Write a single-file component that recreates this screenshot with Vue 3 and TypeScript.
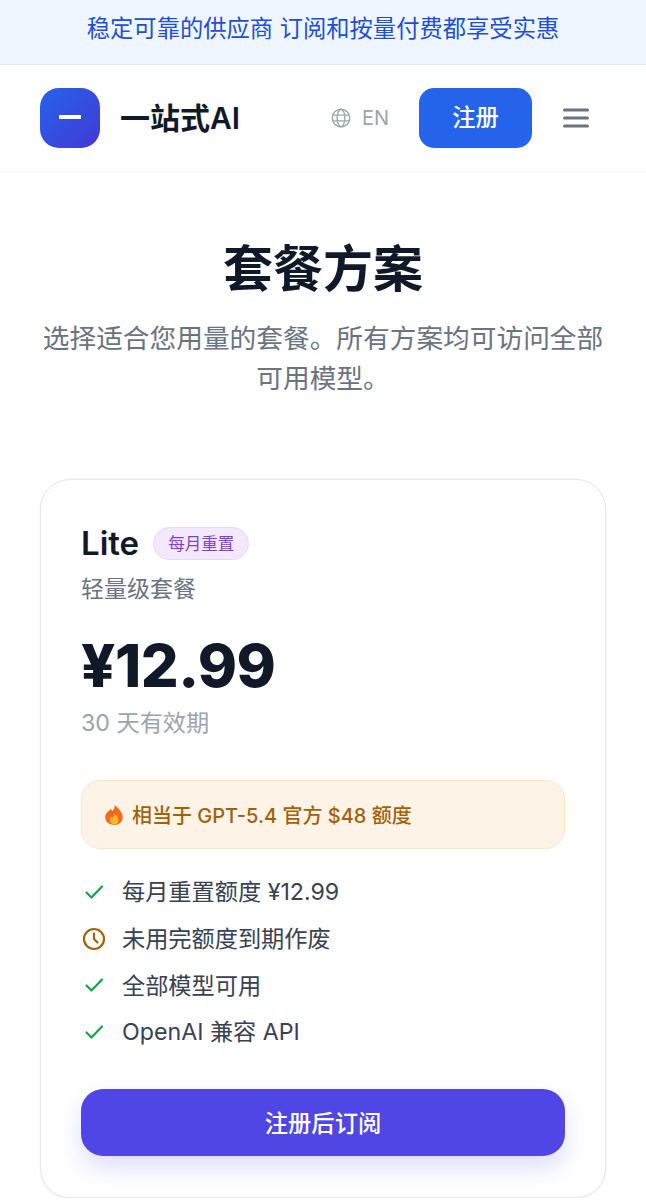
<template>
  <div class="page">
    <div class="banner">稳定可靠的供应商 订阅和按量付费都享受实惠</div>

    <header class="nav">
      <div class="brand">
        <span class="brand__logo"><span class="brand__dash"></span></span>
        <span class="brand__name">一站式AI</span>
      </div>
      <div class="nav__lang">
        <svg class="nav__globe" viewBox="0 0 24 24" fill="none" stroke="currentColor" stroke-width="1.6">
          <circle cx="12" cy="12" r="10.500" />
          <ellipse cx="12" cy="12" rx="4.600" ry="10.500" />
          <path d="M2.300 8.500h19.400M2.300 15.500h19.400" />
        </svg>
        <span>EN</span>
      </div>
      <button class="nav__signup">注册</button>
      <svg class="nav__menu" viewBox="0 0 26 20" fill="none" stroke="currentColor" stroke-width="3" stroke-linecap="round">
        <path d="M1.500 2h23M1.500 10h23M1.500 18h23" />
      </svg>
    </header>

    <section class="intro">
      <h1 class="intro__title">套餐方案</h1>
      <p class="intro__text">选择适合您用量的套餐。所有方案均可访问全部可用模型。</p>
    </section>

    <article class="plan">
      <div class="plan__head">
        <h2 class="plan__name">Lite</h2>
        <span class="plan__badge">每月重置</span>
      </div>
      <p class="plan__sub">轻量级套餐</p>
      <div class="plan__price">¥12.99</div>
      <p class="plan__valid">30 天有效期</p>

      <div class="callout">
        <svg class="callout__flame" viewBox="0 0 24 24">
          <path fill="#f4691c" d="M12.600 1c.6 3.400-1 5-2.700 6.800-.5-.8-.7-1.600-.7-2.600C6 7.500 2.500 10.500 2.500 14.300 2.500 19.200 6.800 23 12 23s9.500-3.600 9.500-8.300C21.500 9.200 16.800 4.200 12.600 1z" />
          <path fill="#fbb52b" d="M12.300 11c.3 2-1 2.900-2 4-.5-.4-.8-.9-.9-1.500-1.300 1.300-2 2.600-2 4 0 2.900 2.100 5 4.700 5s4.700-2.100 4.700-4.900c0-2.900-1.900-5.300-4.500-6.600z" />
        </svg>
        <span>相当于 GPT-5.4 官方 $48 额度</span>
      </div>

      <ul class="features">
        <li v-for="item in features" :key="item.text" class="features__row">
          <svg v-if="item.kind === 'check'" class="features__icon features__icon--check" viewBox="0 0 24 24" fill="none" stroke="currentColor" stroke-width="2.200" stroke-linecap="round" stroke-linejoin="round">
            <path d="M4.500 12.500l5 5L20 6.500" />
          </svg>
          <svg v-else class="features__icon features__icon--clock" viewBox="0 0 24 24" fill="none" stroke="currentColor" stroke-width="2.200" stroke-linecap="round" stroke-linejoin="round">
            <circle cx="12" cy="12" r="10" />
            <path d="M12 6.500V12l3.500 3.500" />
          </svg>
          <span>{{ item.text }}</span>
        </li>
      </ul>

      <button class="plan__cta">注册后订阅</button>
    </article>
  </div>
</template>

<script setup lang="ts">
interface Feature {
  kind: 'check' | 'clock'
  text: string
}

const features: Feature[] = [
  { kind: 'check', text: '每月重置额度 ¥12.99' },
  { kind: 'clock', text: '未用完额度到期作废' },
  { kind: 'check', text: '全部模型可用' },
  { kind: 'check', text: 'OpenAI 兼容 API' },
]
</script>

<style>
html,
body {
  background: #fff;
}
</style>

<style scoped>
.page {
  font-family: Inter, "Noto Sans CJK SC", sans-serif;
  color: #111827;
}

.banner {
  height: 54px;
  padding-bottom: 10px;
  display: flex;
  align-items: center;
  justify-content: center;
  background: #eff6ff;
  border-bottom: 1px solid #e5ebf3;
  color: #1d4ed8;
  font-size: 23.300px;
}

.nav {
  height: 106px;
  display: flex;
  align-items: center;
  padding: 0 57px 0 40px;
  border-bottom: 1px solid #f3f4f6;
}

.brand {
  display: flex;
  align-items: center;
  gap: 20px;
  margin-right: auto;
}

.brand__logo {
  width: 60px;
  height: 60px;
  border-radius: 19px;
  background: linear-gradient(135deg, #2563eb, #4338d4);
  display: flex;
  align-items: center;
  justify-content: center;
}

.brand__dash {
  width: 22px;
  height: 4px;
  margin-bottom: 3px;
  background: #fff;
}

.brand__name {
  margin-bottom: 4px;
  font-size: 30px;
  font-weight: 600;
}

.nav__lang {
  display: flex;
  align-items: center;
  gap: 11px;
  color: #9ca3af;
  font-size: 20px;
  margin-right: 30px;
}

.nav__globe {
  width: 20px;
  height: 20px;
}

.nav__signup {
  width: 113px;
  height: 60px;
  padding: 0 0 5px;
  border: none;
  border-radius: 15px;
  background: #2563eb;
  color: #fff;
  font: 500 23.300px Inter, "Noto Sans CJK SC", sans-serif;
  margin-right: 31px;
}

.nav__menu {
  width: 26px;
  height: 20px;
  color: #6b7280;
}

.intro {
  padding: 67px 40px 0;
  text-align: center;
}

.intro__title {
  margin: 0;
  font-size: 50px;
  line-height: 60px;
  font-weight: 700;
}

.intro__text {
  margin: 19px 0 0;
  font-size: 26.700px;
  line-height: 40px;
  color: #6b7280;
}

.plan {
  margin: 81px 40px 0;
  padding: 41px 40px 40.500px;
  border: 1.500px solid #e5e7eb;
  border-radius: 30px;
  background: #fff;
  box-shadow: 0 1px 3px rgba(0, 0, 0, 0.06);
}

.plan__head {
  display: flex;
  align-items: center;
  gap: 14px;
}

.plan__name {
  margin: 0;
  font-size: 33px;
  line-height: 44px;
  font-weight: 600;
}

.plan__badge {
  height: 33px;
  padding: 0 14px;
  display: flex;
  align-items: center;
  border: 1.500px solid #e9d5ff;
  border-radius: 17px;
  background: #f3e8ff;
  color: #7e3fd0;
  font-size: 16.500px;
  box-sizing: border-box;
}

.plan__sub {
  margin: 7px 0 0;
  font-size: 23px;
  line-height: 34px;
  color: #6b7280;
}

.plan__price {
  margin-top: 21px;
  font-size: 59.500px;
  line-height: 76px;
  font-weight: 800;
  letter-spacing: -0.500px;
}

.plan__valid {
  margin: 3px 0 0;
  font-size: 23.200px;
  line-height: 34px;
  color: #9ca3af;
}

.callout {
  margin-top: 40px;
  height: 69px;
  box-sizing: border-box;
  display: flex;
  align-items: center;
  gap: 7px;
  padding: 0 21px;
  border: 1.500px solid #fde6c4;
  border-radius: 19px;
  background: #fef3e7;
  color: #a16207;
  font-size: 20px;
  font-weight: 500;
}

.callout__flame {
  width: 22px;
  height: 22px;
  flex: none;
}

.features {
  list-style: none;
  margin: 18px 0 0;
  padding: 0;
}

.features__row {
  height: 46.700px;
  display: flex;
  align-items: center;
  gap: 16px;
  font-size: 23.200px;
  color: #374151;
}

.features__icon {
  width: 24px;
  height: 24px;
  margin: 3px 0 0 1px;
  flex: none;
}

.features__icon--check {
  color: #16a34a;
}

.features__icon--clock {
  color: #a16207;
}

.plan__cta {
  display: block;
  width: 100%;
  height: 67px;
  margin-top: 35.500px;
  padding: 0 0 2px;
  border: none;
  border-radius: 22px;
  background: #4f46e5;
  color: #fff;
  font: 500 23.300px Inter, "Noto Sans CJK SC", sans-serif;
  box-shadow: 0 12px 24px rgba(79, 70, 229, 0.18);
}
</style>
